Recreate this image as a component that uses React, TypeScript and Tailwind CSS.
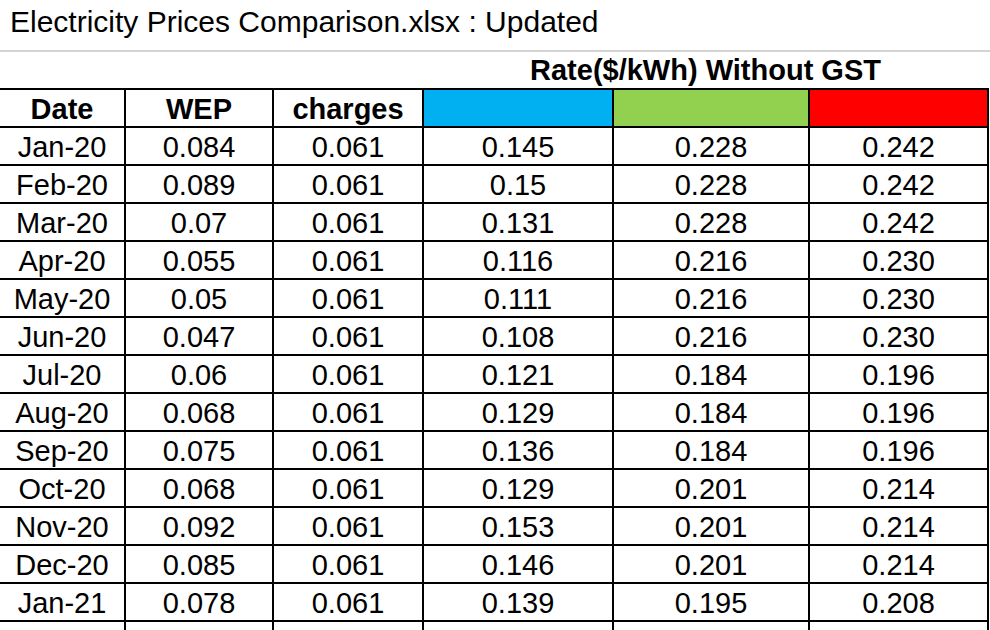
import React from "react";

const rows: string[][] = [
  ["Jan-20", "0.084", "0.061", "0.145", "0.228", "0.242"],
  ["Feb-20", "0.089", "0.061", "0.15", "0.228", "0.242"],
  ["Mar-20", "0.07", "0.061", "0.131", "0.228", "0.242"],
  ["Apr-20", "0.055", "0.061", "0.116", "0.216", "0.230"],
  ["May-20", "0.05", "0.061", "0.111", "0.216", "0.230"],
  ["Jun-20", "0.047", "0.061", "0.108", "0.216", "0.230"],
  ["Jul-20", "0.06", "0.061", "0.121", "0.184", "0.196"],
  ["Aug-20", "0.068", "0.061", "0.129", "0.184", "0.196"],
  ["Sep-20", "0.075", "0.061", "0.136", "0.184", "0.196"],
  ["Oct-20", "0.068", "0.061", "0.129", "0.201", "0.214"],
  ["Nov-20", "0.092", "0.061", "0.153", "0.201", "0.214"],
  ["Dec-20", "0.085", "0.061", "0.146", "0.201", "0.214"],
  ["Jan-21", "0.078", "0.061", "0.139", "0.195", "0.208"],
];

const widths = ["w-[125px]", "w-[148px]", "w-[150px]", "w-[190px]", "w-[196px]", "w-[179px]"];

const cell = "border-2 border-black text-center align-middle p-0 pt-[2px] first:border-l-0";

export default function App() {
  return (
    <div
      className="h-[630px] w-[990px] overflow-hidden bg-white text-black"
      style={{ fontFamily: '"Liberation Sans", Arial, sans-serif' }}
    >
      {/* file title */}
      <div className="h-[50px] pl-[10px] pt-[5px] text-[30px] leading-[34px]">
        Electricity Prices Comparison.xlsx : Updated
      </div>
      <div className="h-[2px] bg-[#d4d4d4]" />

      {/* group heading */}
      <div className="flex h-[36px]">
        <div className="w-[423px]" />
        <div className="w-[565px] text-center text-[29px] font-bold leading-[36px]">
          Rate($/kWh) Without GST
        </div>
      </div>

      <table className="table-fixed border-collapse text-[29px] leading-[32px]">
        <colgroup>
          {widths.map((w, i) => (
            <col key={i} className={w} />
          ))}
        </colgroup>
        <thead>
          <tr className="h-[38px] font-bold">
            <th className={cell}>Date</th>
            <th className={cell}>WEP</th>
            <th className={cell}>charges</th>
            <th className={`${cell} bg-[#00b0f0]`} />
            <th className={`${cell} bg-[#92d050]`} />
            <th className={`${cell} bg-[#ff0000]`} />
          </tr>
        </thead>
        <tbody>
          {rows.map((r) => (
            <tr key={r[0]} className="h-[38px]">
              {r.map((v, i) => (
                <td key={i} className={cell}>
                  {v}
                </td>
              ))}
            </tr>
          ))}
          <tr className="h-[38px]">
            {widths.map((_, i) => (
              <td key={i} className={cell} />
            ))}
          </tr>
        </tbody>
      </table>
    </div>
  );
}
